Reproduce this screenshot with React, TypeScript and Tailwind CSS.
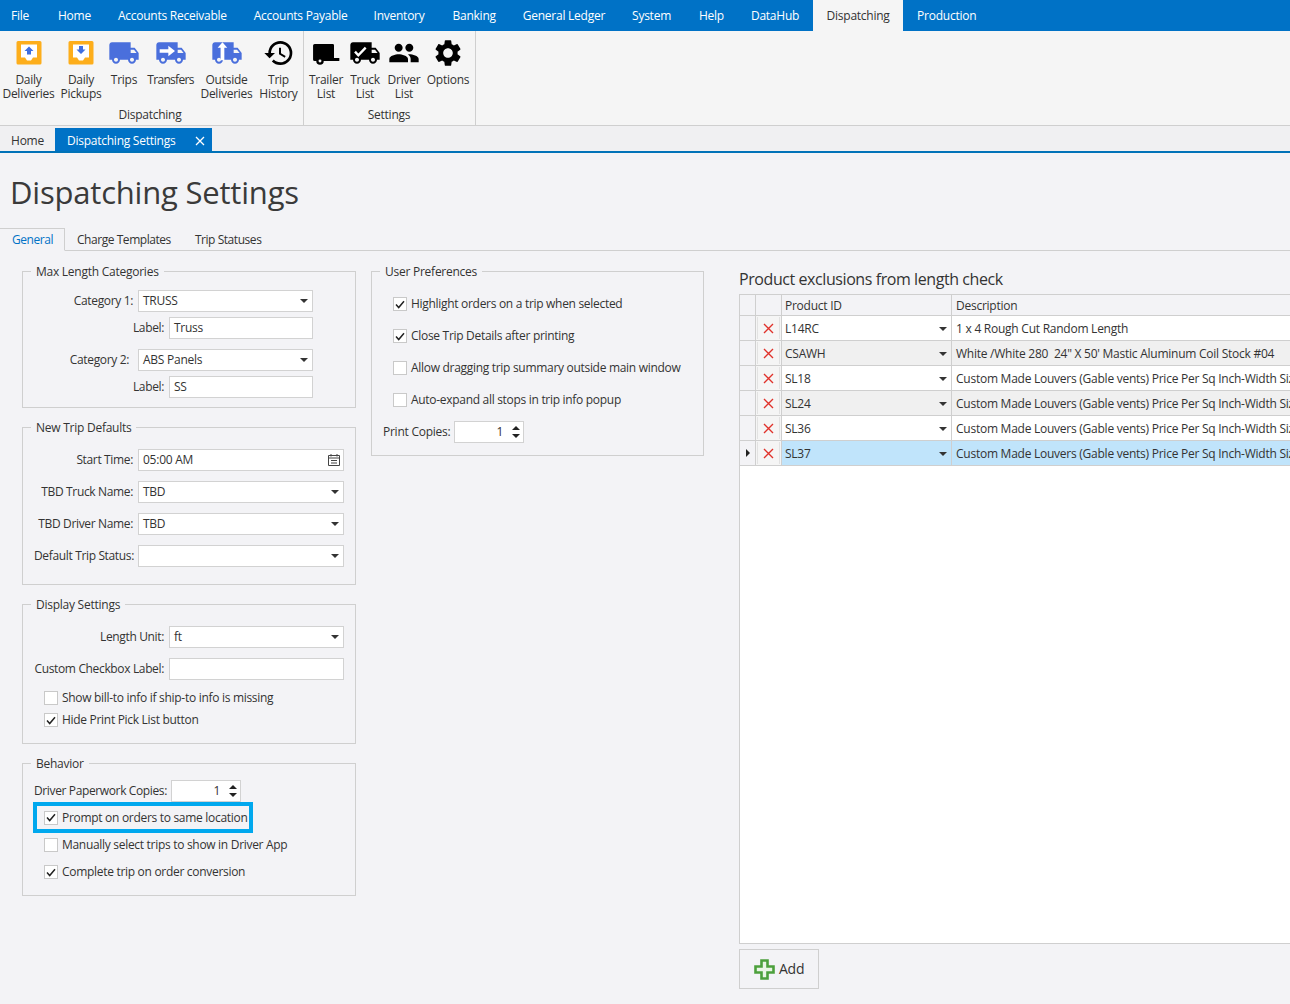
import React from "react";
import { MdHistory, MdPeople, MdSettings } from "react-icons/md";

const TRUCK = "M20 8h-3V4H3c-1.1 0-2 .9-2 2v11h2c0 1.66 1.34 3 3 3s3-1.34 3-3h6c0 1.66 1.34 3 3 3s3-1.34 3-3h2v-5l-3-4zM6 18.5c-.83 0-1.5-.67-1.5-1.5s.67-1.5 1.5-1.5 1.5.67 1.5 1.5-.67 1.5-1.5 1.5zm13.5-9l1.96 2.5H17V9.5h2.5zm-1.5 9c-.83 0-1.5-.67-1.5-1.5s.67-1.5 1.5-1.5 1.5.67 1.5 1.5-.67 1.5-1.5 1.5z";

function Tray({ up }: { up: boolean }) {
  return (
    <svg width="26" height="26" viewBox="0 0 26 26">
      <path d="M2 1h22a1.5 1.5 0 0 1 1.500 1.500V23a1.500 1.500 0 0 1-1.500 1.500H2A1.500 1.500 0 0 1 .5 23V2.500A1.500 1.500 0 0 1 2 1z" fill="#fdae1b" />
      <path d="M5 4.500h16v13h-4l-2 3h-4l-2-3H5z" fill="#fff" />
      {up ? <path d="M13 6.500l4.500 4.500H15v3.500h-4V11H8.500z" fill="#3f6fe0" /> : <path d="M11 6h4v3.500h2.500L13 14 8.500 9.500H11z" fill="#3f6fe0" />}
    </svg>
  );
}

function Truck({ color = "#4a6fdc", children }: { color?: string; children?: React.ReactNode }) {
  return (
    <svg width="32" height="32" viewBox="0 0 24 24" className="-my-[3px]">
      <path d={TRUCK} fill={color} />
      {children}
    </svg>
  );
}

function Trailer() {
  return (
    <svg width="32" height="32" viewBox="0 0 24 24" className="-my-[3px]">
      <path d="M3.500 5.200H17a1 1 0 0 1 1 1v9.500h4V18H10.300a2.800 2.800 0 0 1-5.600 0H3.500a1.200 1.200 0 0 1-1.200-1.200V6.400a1.200 1.200 0 0 1 1.200-1.200z" fill="#000" />
      <circle cx="7.500" cy="18" r="1.100" fill="#f5f5f5" />
    </svg>
  );
}

function RibbonItem({ icon, lines, w, textClass = "" }: { icon: React.ReactNode; lines: string[]; w: string; textClass?: string }) {
  return (
    <div className={`flex flex-col items-center ${w}`}>
      <div className="h-[26px] flex items-center justify-center">{icon}</div>
      <div className={`mt-[7px] text-center whitespace-nowrap ${textClass}`}>
        {lines.map((l) => (
          <div key={l} className="h-[14px] leading-[14px]">{l}</div>
        ))}
      </div>
    </div>
  );
}

function Check({ checked, label, className = "" }: { checked?: boolean; label: string; className?: string }) {
  return (
    <div className={`flex items-center gap-[4px] h-[16px] whitespace-nowrap tracking-[-0.3px] ${className}`}>
      <div className="w-[14px] h-[14px] border border-[#c9c9c9] bg-white flex items-center justify-center shrink-0">
        {checked && (
          <svg width="10" height="9" viewBox="0 0 10 9">
            <path d="M1 4.500l2.700 3L9 1.200" fill="none" stroke="#222" strokeWidth="1.500" />
          </svg>
        )}
      </div>
      <span>{label}</span>
    </div>
  );
}

function Caret() {
  return <div className="w-0 h-0 border-x-[4.500px] border-x-transparent border-t-[4.500px] border-t-[#333]" />;
}

function Combo({ value, className = "" }: { value: string; className?: string }) {
  return (
    <div className={`h-[22px] bg-white border border-[#d2d2d2] flex items-center pl-[4px] pr-[4px] justify-between ${className}`}>
      <span>{value}</span>
      <Caret />
    </div>
  );
}

function Input({ value = "", className = "", children }: { value?: string; className?: string; children?: React.ReactNode }) {
  return (
    <div className={`h-[22px] bg-white border border-[#d2d2d2] flex items-center pl-[4px] pr-[2px] justify-between ${className}`}>
      <span>{value}</span>
      {children}
    </div>
  );
}

function Spin({ className = "" }: { className?: string }) {
  return (
    <div className={`h-[22px] w-[70px] bg-white border border-[#d2d2d2] flex items-center justify-end gap-[9px] pr-[3px] ${className}`}>
      <span>1</span>
      <div className="flex flex-col gap-[4px]">
        <div className="w-0 h-0 border-x-[4px] border-x-transparent border-b-[4px] border-b-[#222]" />
        <div className="w-0 h-0 border-x-[4px] border-x-transparent border-t-[4px] border-t-[#222]" />
      </div>
    </div>
  );
}

function Row({ label, labelW, children, className = "", pr = "pr-[5px]" }: { label: string; labelW: string; children: React.ReactNode; className?: string; pr?: string }) {
  return (
    <div className={`flex items-center ${className}`}>
      <div className={`${labelW} ${pr} text-right whitespace-nowrap shrink-0 tracking-[-0.35px]`}>{label}</div>
      <div className="flex-1 min-w-0">{children}</div>
    </div>
  );
}

function Group({ title, children, className = "" }: { title: string; children: React.ReactNode; className?: string }) {
  return (
    <fieldset className={`border border-[#cfcfcf] pl-[11px] pr-[11px] m-0 min-w-0 ${className}`}>
      <legend className="-ml-[3px] px-[5px] leading-[16px] h-[14px]">{title}</legend>
      {children}
    </fieldset>
  );
}

const ROWS = [
  ["L14RC", "1 x 4 Rough Cut Random Length", false],
  ["CSAWH", "White /White 280  24\" X 50' Mastic Aluminum Coil Stock #04", true],
  ["SL18", "Custom Made Louvers (Gable vents) Price Per Sq Inch-Width Size x Height Size", false],
  ["SL24", "Custom Made Louvers (Gable vents) Price Per Sq Inch-Width Size x Height Size", true],
  ["SL36", "Custom Made Louvers (Gable vents) Price Per Sq Inch-Width Size x Height Size", false],
  ["SL37", "Custom Made Louvers (Gable vents) Price Per Sq Inch-Width Size x Height Size", false],
] as const;

const MENU = [
  ["File", "ml-[11px]"],
  ["Home", "ml-[29px]"],
  ["Accounts Receivable", "ml-[27px]"],
  ["Accounts Payable", "ml-[27px]"],
  ["Inventory", "ml-[26px]"],
  ["Banking", "ml-[28px]"],
  ["General Ledger", "ml-[27px]"],
  ["System", "ml-[27px]"],
  ["Help", "ml-[28px]"],
  ["DataHub", "ml-[27px]"],
];

export default function App() {
  return (
    <div className="w-[1290px] h-[1004px] overflow-hidden flex flex-col bg-[#f3f3f6] text-[#333] text-[12px] leading-[16px] font-['Open_Sans',sans-serif] tracking-[-0.25px]">
      <div className="h-[31px] bg-[#0072c6] text-white flex items-center shrink-0">
        {MENU.map(([t, c]) => (
          <span key={t} className={c}>{t}</span>
        ))}
        <span className="ml-[14px] w-[90px] h-full bg-[#f5f5f5] text-[#333] flex items-center justify-center">Dispatching</span>
        <span className="ml-[14px]">Production</span>
      </div>

      <div className="h-[95px] bg-[#f5f5f5] border-b border-[#cfcfcf] flex shrink-0">
        <div className="w-[304px] border-r border-[#cfcfcf] flex flex-col pt-[9px]">
          <div className="flex">
            <RibbonItem w="w-[57px]" lines={["Daily", "Deliveries"]} icon={<Tray up />} />
            <RibbonItem w="w-[48px]" lines={["Daily", "Pickups"]} icon={<Tray up={false} />} />
            <RibbonItem w="w-[38px]" lines={["Trips"]} icon={<Truck />} />
            <RibbonItem w="w-[55px]" textClass="tracking-[-0.7px]" lines={["Transfers"]} icon={<Truck><path d="M3.500 9.200h6.500V6.500l5 4-5 4v-2.700H3.500z" fill="#fff" /></Truck>} />
            <RibbonItem w="w-[57px]" lines={["Outside", "Deliveries"]} icon={<Truck><path d="M8.600 4l3.600 4H10v9.500H7.200V8H5z" fill="#fff" /></Truck>} />
            <RibbonItem w="w-[47px]" lines={["Trip", "History"]} icon={<MdHistory size={32} className="text-black -my-[3px]" />} />
          </div>
          <div className="mt-auto mb-[2px] text-center pr-[3px]">Dispatching</div>
        </div>
        <div className="w-[172px] border-r border-[#cfcfcf] flex flex-col pt-[9px] pl-[2px]">
          <div className="flex">
            <RibbonItem w="w-[40px]" lines={["Trailer", "List"]} icon={<Trailer />} />
            <RibbonItem w="w-[38px]" lines={["Truck", "List"]} icon={<Truck color="#000"><path d="M4.500 11l2.500 2.700L12.500 8" fill="none" stroke="#fff" strokeWidth="1.800" /></Truck>} />
            <RibbonItem w="w-[40px]" lines={["Driver", "List"]} icon={<MdPeople size={32} className="text-black -my-[3px]" />} />
            <RibbonItem w="w-[48px]" lines={["Options"]} icon={<MdSettings size={32} className="text-black -my-[3px]" />} />
          </div>
          <div className="mt-auto mb-[2px] text-center pr-[3px]">Settings</div>
        </div>
      </div>

      <div className="h-[27px] border-b-2 border-[#0072b8] flex items-end shrink-0 bg-[#f0f0f2]">
        <div className="w-[55px] h-[23px] pt-[2px] flex items-center justify-center">Home</div>
        <div className="w-[157px] h-[23px] pt-[2px] bg-[#0072c6] text-white flex items-center pl-[12px] justify-between pr-[7px]">
          <span>Dispatching Settings</span>
          <svg width="10" height="10" viewBox="0 0 10 10">
            <path d="M1 1l8 8M9 1l-8 8" stroke="#fff" strokeWidth="1.300" />
          </svg>
        </div>
      </div>

      <div className="h-[75px] pl-[10px] pt-[19px] text-[31px] leading-[40px] tracking-[-0.2px] shrink-0 text-[#3a3a3a]">Dispatching Settings</div>

      <div className="h-[23px] border-b border-[#cfcfcf] flex items-end shrink-0 tracking-[-0.45px]">
        <div className="w-[65px] h-[23px] -mb-px bg-[#f3f3f6] border border-[#cfcfcf] border-b-transparent border-l-0 text-[#0072c6] flex items-center pl-[12px]">General</div>
        <div className="ml-[12px] h-[21px] flex items-center">Charge Templates</div>
        <div className="ml-[24px] h-[21px] flex items-center">Trip Statuses</div>
      </div>

      <div className="flex-1 min-h-0 flex pl-[22px] pt-[13px]">
        <div className="w-[334px] shrink-0 flex flex-col gap-[12px]">
          <Group title="Max Length Categories" className="h-[144px] pt-[12px]">
            <Row label="Category 1:" labelW="w-[104px]" className="mr-[31px]"><Combo value="TRUSS" /></Row>
            <Row label="Label:" labelW="w-[135px]" className="mt-[5px] mr-[31px]"><Input value="Truss" /></Row>
            <Row label="Category 2:" labelW="w-[104px]" pr="pr-[9px]" className="mt-[10px] mr-[31px]"><Combo value="ABS Panels" /></Row>
            <Row label="Label:" labelW="w-[135px]" className="mt-[5px] mr-[31px]"><Input value="SS" /></Row>
          </Group>
          <Group title="New Trip Defaults" className="h-[165px] pt-[15px]">
            <Row label="Start Time:" labelW="w-[104px]">
              <Input value="05:00 AM">
                <svg width="14" height="14" viewBox="0 0 14 14">
                  <path d="M1.500 2.500h11v10h-11zM1.500 5h11M4 1v2.500M10 1v2.500M4 7.500h6M4 10h6" fill="none" stroke="#444" />
                </svg>
              </Input>
            </Row>
            <Row label="TBD Truck Name:" labelW="w-[104px]" className="mt-[10px]"><Combo value="TBD" /></Row>
            <Row label="TBD Driver Name:" labelW="w-[104px]" className="mt-[10px]"><Combo value="TBD" /></Row>
            <Row label="Default Trip Status:" labelW="w-[104px]" className="mt-[10px]"><Combo value="" /></Row>
          </Group>
          <Group title="Display Settings" className="h-[147px] pt-[15px]">
            <Row label="Length Unit:" labelW="w-[135px]"><Combo value="ft" /></Row>
            <Row label="Custom Checkbox Label:" labelW="w-[135px]" className="mt-[10px]"><Input /></Row>
            <Check label="Show bill-to info if ship-to info is missing" className="mt-[10px] ml-[10px]" />
            <Check checked label="Hide Print Pick List button" className="mt-[6px] ml-[10px]" />
          </Group>
          <Group title="Behavior" className="h-[140px] pt-[10px]">
            <div className="flex items-center">
              <div className="w-[137px] whitespace-nowrap tracking-[-0.37px]">Driver Paperwork Copies:</div>
              <Spin />
            </div>
            <div className="w-[220px] h-[31px] border-[4px] border-[#00a8ee] -ml-[1px] pl-[7px] flex items-center">
              <Check checked label="Prompt on orders to same location" />
            </div>
            <Check label="Manually select trips to show in Driver App" className="mt-[4px] ml-[10px]" />
            <Check checked label="Complete trip on order conversion" className="mt-[11px] ml-[10px]" />
          </Group>
        </div>

        <div className="w-[333px] ml-[15px] shrink-0">
          <Group title="User Preferences" className="h-[192px] pt-[18px]">
            <Check checked label="Highlight orders on a trip when selected" className="ml-[10px]" />
            <Check checked label="Close Trip Details after printing" className="mt-[16px] ml-[10px]" />
            <Check label="Allow dragging trip summary outside main window" className="mt-[16px] ml-[10px]" />
            <Check label="Auto-expand all stops in trip info popup" className="mt-[16px] ml-[10px]" />
            <div className="flex items-center mt-[13px]">
              <div className="w-[71px] whitespace-nowrap">Print Copies:</div>
              <Spin />
            </div>
          </Group>
        </div>

        <div className="ml-[35px] w-[600px] shrink-0 flex flex-col">
          <div className="text-[16px] leading-[20px] mt-[5px] h-[25px] text-[#333] tracking-[-0.42px]">Product exclusions from length check</div>
          <div className="h-[650px] bg-white border border-[#cfcfcf] shrink-0">
            <div className="flex h-[21px] bg-[#f3f3f6] border-b border-[#cfcfcf]">
              <div className="w-[16px] border-r border-[#cfcfcf]" />
              <div className="w-[26px] border-r border-[#cfcfcf]" />
              <div className="w-[170px] border-r border-[#cfcfcf] pl-[3px] pt-[1px] flex items-center">Product ID</div>
              <div className="flex-1 pl-[4px] pt-[1px] flex items-center">Description</div>
            </div>
            {ROWS.map(([id, desc, alt], i) => {
              const sel = i === 5;
              const bg = sel ? "bg-[#c0e4fb]" : alt ? "bg-[#f0f0f0]" : "bg-white";
              return (
                <div key={id} className="flex h-[25px] border-b border-[#cfcfcf]">
                  <div className="w-[16px] border-r border-[#cfcfcf] bg-[#f3f3f6] flex items-center justify-center">
                    {sel && <div className="w-0 h-0 border-y-[4px] border-y-transparent border-l-[4px] border-l-[#222]" />}
                  </div>
                  <div className="w-[26px] border-r border-[#cfcfcf] bg-[#f5f5f5] flex items-center justify-center">
                    <div className="w-[23px] h-[22px] bg-[#f5f5f5] border-x border-[#e2e2e2] flex items-center justify-center">
                      <svg width="11" height="11" viewBox="0 0 11 11">
                        <path d="M1 1l9 9M10 1l-9 9" stroke="#e0322b" strokeWidth="1.400" />
                      </svg>
                    </div>
                  </div>
                  <div className={`w-[170px] border-r border-[#cfcfcf] pl-[3px] pr-[4px] pt-[1px] flex items-center justify-between ${bg}`}>
                    <span>{id}</span>
                    <Caret />
                  </div>
                  <div className={`flex-1 pl-[4px] pt-[1px] flex items-center whitespace-pre overflow-hidden ${bg}`}>{desc}</div>
                </div>
              );
            })}
          </div>
          <div className="mt-[5px] w-[80px] h-[40px] border border-[#cfcfcf] flex items-center pl-[14px] gap-[4px] text-[14px]">
            <svg width="21" height="21" viewBox="0 0 21 21">
              <path d="M7.500 1.500h6v6h6v6h-6v6h-6v-6h-6v-6h6z" fill="#eaf5e6" stroke="#4ca03c" strokeWidth="2.600" />
            </svg>
            <span>Add</span>
          </div>
        </div>
      </div>
    </div>
  );
}
